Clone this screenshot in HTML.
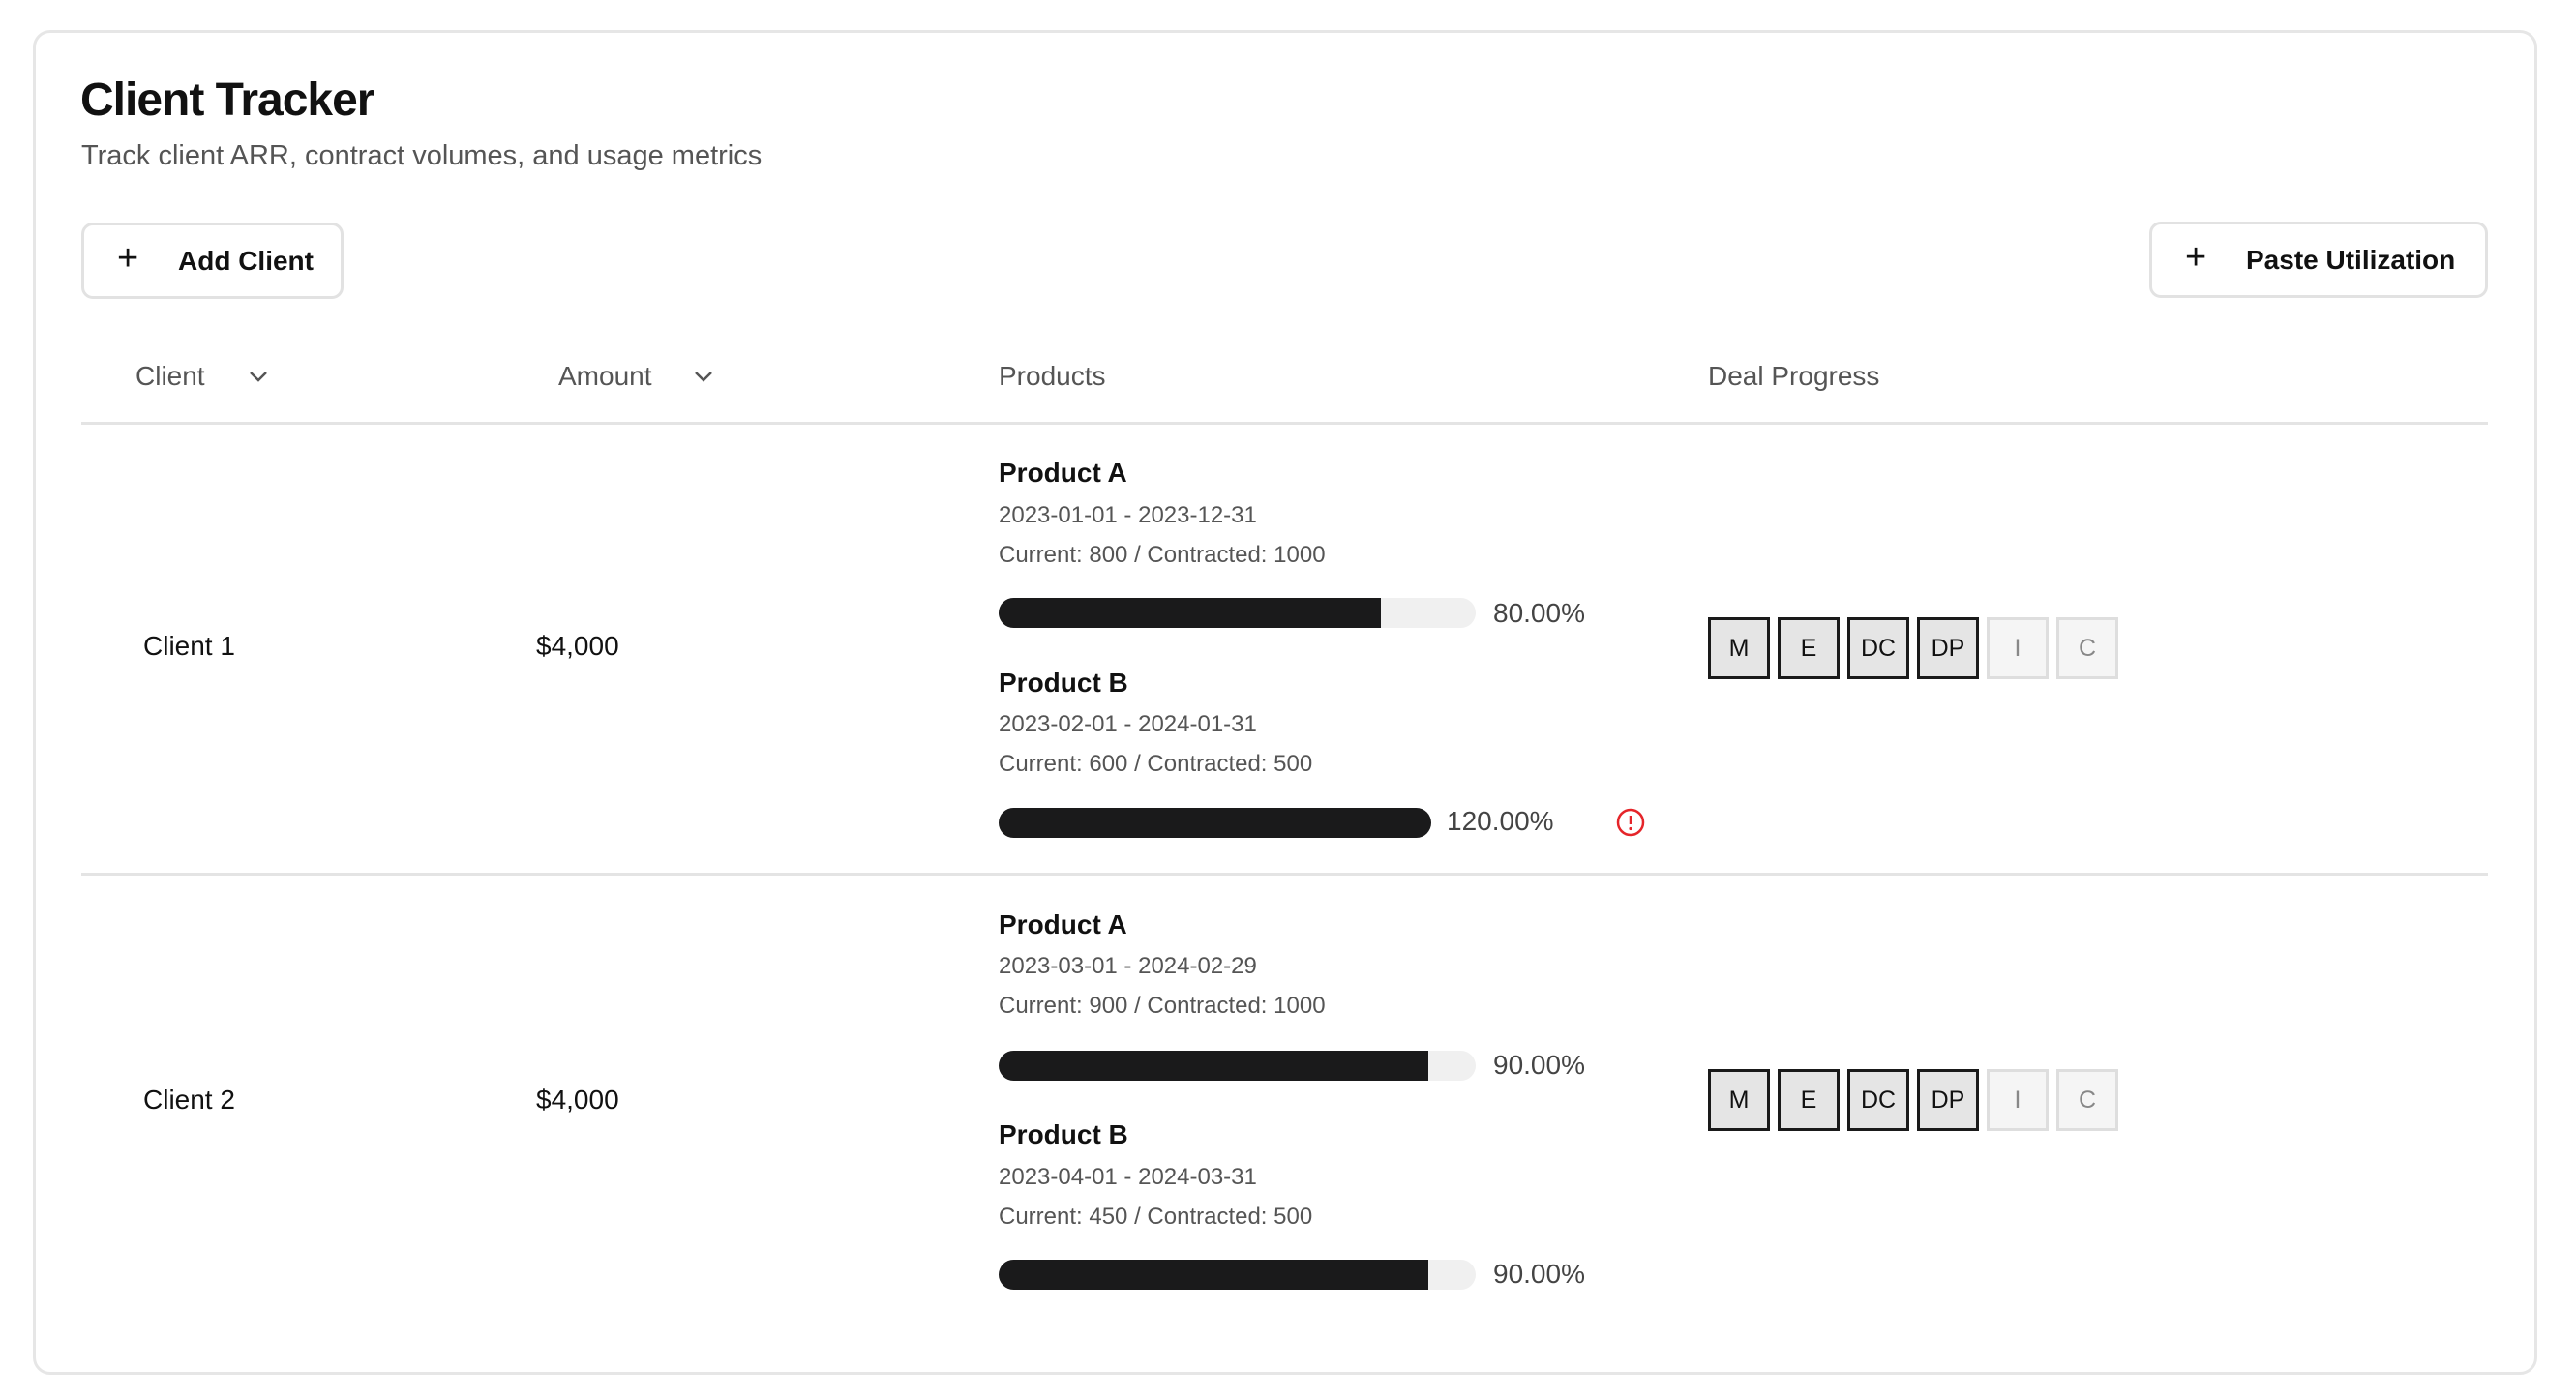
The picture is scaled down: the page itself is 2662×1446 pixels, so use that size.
<!DOCTYPE html>
<html><head><meta charset="utf-8"><style>
*{box-sizing:border-box;margin:0;padding:0}
body{width:2662px;height:1446px;background:#fff;font-family:"Liberation Sans",sans-serif;position:relative;overflow:hidden;color:#111}
.a{position:absolute;white-space:nowrap}
.card{position:absolute;left:34px;top:31px;width:2588px;height:1390px;border:3px solid #e6e6e6;border-radius:18px}
.btn{position:absolute;height:79px;border:3px solid #e2e2e2;border-radius:12px;font-size:28px;font-weight:bold;color:#111;line-height:73px}
.hd{font-size:28px;color:#555}
.line{position:absolute;left:84px;width:2487px;height:3px;background:#e4e4e4}
.pn{font-size:28px;font-weight:bold;color:#111}
.sm{font-size:24px;color:#555}
.bar{position:absolute;height:31px;border-radius:16px;background:#f0f0f0;overflow:hidden}
.bar i{position:absolute;left:0;top:0;bottom:0;background:#1a1a1b}
.pct{font-size:28px;color:#444}
.bd{position:absolute;width:64px;height:64px;border:3px solid #1a1a1a;background:#e5e5e5;font-size:25px;text-align:center;line-height:58px;color:#111}
.bd.off{border-color:#dedede;background:#f5f5f5;color:#888}
</style></head><body>
<div class="card"></div>
<div class="a" style="left:83px;top:76px;font-size:48px;font-weight:bold;letter-spacing:-1px">Client Tracker</div>
<div class="a" style="left:84px;top:145px;font-size:29px;color:#555">Track client ARR, contract volumes, and usage metrics</div>
<div class="btn" style="left:84px;top:230px;width:271px"><span class="a" style="left:34px;font-size:38px;font-weight:normal;top:-2px">+</span><span class="a" style="left:97px">Add Client</span></div>
<div class="btn" style="left:2221px;top:229px;width:350px"><span class="a" style="left:34px;font-size:38px;font-weight:normal;top:-2px">+</span><span class="a" style="left:97px">Paste Utilization</span></div>
<div class="a hd" style="left:140px;top:373px">Client</div>
<svg class="a" style="left:256px;top:382px" width="22" height="14"><path d="M3 3l8 8 8-8" stroke="#555" stroke-width="2.5" fill="none"/></svg>
<div class="a hd" style="left:577px;top:373px">Amount</div>
<svg class="a" style="left:716px;top:382px" width="22" height="14"><path d="M3 3l8 8 8-8" stroke="#555" stroke-width="2.5" fill="none"/></svg>
<div class="a hd" style="left:1032px;top:373px">Products</div>
<div class="a hd" style="left:1765px;top:373px">Deal Progress</div>
<div class="line" style="top:436px"></div>
<div class="line" style="top:902px"></div>

<div class="a pn" style="left:148px;top:652px;font-weight:normal;color:#111">Client 1</div>
<div class="a pn" style="left:554px;top:652px;font-weight:normal;color:#111">$4,000</div>
<div class="a pn" style="left:1032px;top:473px">Product A</div>
<div class="a sm" style="left:1032px;top:519px">2023-01-01 - 2023-12-31</div>
<div class="a sm" style="left:1032px;top:560px">Current: 800 / Contracted: 1000</div>
<div class="bar" style="left:1032px;top:618px;width:493px"><i style="width:395px"></i></div>
<div class="a pct" style="left:1543px;top:618px">80.00%</div>
<div class="a pn" style="left:1032px;top:690px">Product B</div>
<div class="a sm" style="left:1032px;top:735px">2023-02-01 - 2024-01-31</div>
<div class="a sm" style="left:1032px;top:776px">Current: 600 / Contracted: 500</div>
<div class="bar" style="left:1032px;top:835px;width:447px"><i style="width:447px"></i></div>
<div class="a pct" style="left:1495px;top:833px">120.00%</div>
<svg class="a" style="left:1669px;top:834px" width="32" height="32"><circle cx="16" cy="16" r="13" stroke="#e5252a" stroke-width="2.5" fill="none"/><path d="M16 9v9" stroke="#e5252a" stroke-width="2.5"/><circle cx="16" cy="22.5" r="1.6" fill="#e5252a"/></svg>

<div class="a pn" style="left:148px;top:1121px;font-weight:normal">Client 2</div>
<div class="a pn" style="left:554px;top:1121px;font-weight:normal">$4,000</div>
<div class="a pn" style="left:1032px;top:940px">Product A</div>
<div class="a sm" style="left:1032px;top:985px">2023-03-01 - 2024-02-29</div>
<div class="a sm" style="left:1032px;top:1026px">Current: 900 / Contracted: 1000</div>
<div class="bar" style="left:1032px;top:1086px;width:493px"><i style="width:444px"></i></div>
<div class="a pct" style="left:1543px;top:1085px">90.00%</div>
<div class="a pn" style="left:1032px;top:1157px">Product B</div>
<div class="a sm" style="left:1032px;top:1203px">2023-04-01 - 2024-03-31</div>
<div class="a sm" style="left:1032px;top:1244px">Current: 450 / Contracted: 500</div>
<div class="bar" style="left:1032px;top:1302px;width:493px"><i style="width:444px"></i></div>
<div class="a pct" style="left:1543px;top:1301px">90.00%</div>

<div class="bd" style="left:1765px;top:638px">M</div>
<div class="bd" style="left:1837px;top:638px">E</div>
<div class="bd" style="left:1909px;top:638px">DC</div>
<div class="bd" style="left:1981px;top:638px">DP</div>
<div class="bd off" style="left:2053px;top:638px">I</div>
<div class="bd off" style="left:2125px;top:638px">C</div>
<div class="bd" style="left:1765px;top:1105px">M</div>
<div class="bd" style="left:1837px;top:1105px">E</div>
<div class="bd" style="left:1909px;top:1105px">DC</div>
<div class="bd" style="left:1981px;top:1105px">DP</div>
<div class="bd off" style="left:2053px;top:1105px">I</div>
<div class="bd off" style="left:2125px;top:1105px">C</div>
</body></html>
